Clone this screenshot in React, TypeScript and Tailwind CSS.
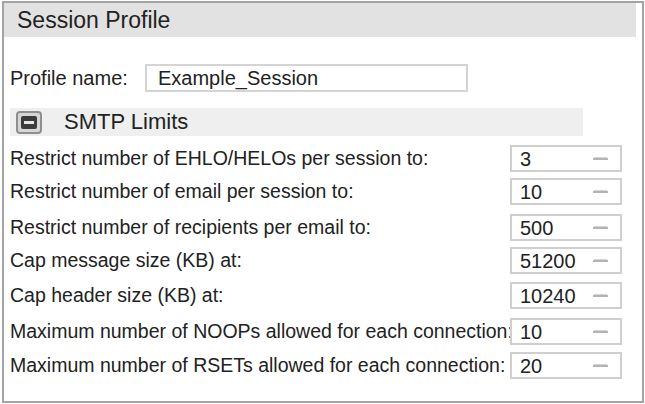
import React from "react";

const rows = [
  { label: "Restrict number of EHLO/HELOs per session to:", value: "3", mt: "mt-[9px]" },
  { label: "Restrict number of email per session to:", value: "10", mt: "mt-[6px]" },
  { label: "Restrict number of recipients per email to:", value: "500", mt: "mt-[9px]" },
  { label: "Cap message size (KB) at:", value: "51200", mt: "mt-[6px]" },
  { label: "Cap header size (KB) at:", value: "10240", mt: "mt-[8px]" },
  { label: "Maximum number of NOOPs allowed for each connection:", value: "10", mt: "mt-[9px]" },
  { label: "Maximum number of RSETs allowed for each connection:", value: "20", mt: "mt-[7px]" },
];

function Spinner() {
  return (
    <svg width="15" height="4" viewBox="0 0 15 4" className="shrink-0">
      <rect x="1" y="0" width="13" height="1" fill="#d4d4d4" />
      <rect x="0" y="1" width="15" height="2" fill="#b4b4b4" />
    </svg>
  );
}

export default function App() {
  return (
    <div
      className="w-[645px] h-[404px] bg-white pt-[1px] pl-[2px] overflow-hidden text-[#222]"
      style={{ fontFamily: '"Liberation Sans", Arial, sans-serif' }}
    >
      <div className="w-[642px] h-[402px] border-2 border-[#a3a3a3] flex flex-col">
        <div className="h-[34px] mr-[6px] bg-[#e2e2e2] flex items-center pl-[13px] text-[23px] leading-none">
          Session Profile
        </div>
        <div className="mt-[27px] flex items-center h-[28px]">
          <div className="w-[141px] pl-[6px] text-[20px] whitespace-nowrap">Profile name:</div>
          <div className="w-[323px] h-[28px] border-2 border-[#d4d4d4] flex items-center pl-[11px] text-[20px]">
            Example_Session
          </div>
        </div>
        <div className="mt-[16px] ml-[6px] w-[573px] h-[28px] bg-[#efefef] flex items-center">
          <div className="ml-[6px] w-[26px] h-[23px] rounded-[4px] border-2 border-[#8f8f8f] bg-[#d6d6d6] flex items-center justify-center">
            <div className="w-[16px] h-[13px] rounded-[2px] bg-[#3c3c3c] flex items-center justify-center">
              <div className="w-[10px] h-[3px] bg-[#e6e6e6]" />
            </div>
          </div>
          <div className="ml-[22px] text-[22px] leading-none">SMTP Limits</div>
        </div>
        {rows.map((r) => (
          <div key={r.label} className={`${r.mt} flex items-center h-[27px]`}>
            <div className="w-[506px] pl-[6px] text-[19.5px] whitespace-nowrap">{r.label}</div>
            <div className="relative w-[112px] h-[27px] bg-white border-2 border-[#cfcfcf] flex items-center justify-between pl-[8px] pr-[12px] text-[20px]">
              <span>{r.value}</span>
              <Spinner />
            </div>
          </div>
        ))}
      </div>
    </div>
  );
}
